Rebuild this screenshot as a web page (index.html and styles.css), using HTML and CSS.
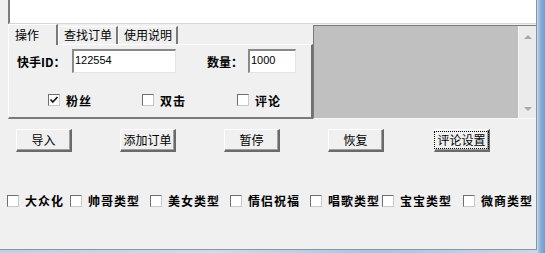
FILE: index.html
```html
<!DOCTYPE html>
<html lang="zh-CN">
<head>
<meta charset="utf-8">
<title>快手订单</title>
<link rel="stylesheet" href="styles.css">
</head>
<body>
<div class="window">
  <div class="client">
    <div class="memo"></div>
    <div class="mid">
      <div class="tabctl">
        <div class="tabbar">
          <div class="tab active">操作</div>
          <div class="tab">查找订单</div>
          <div class="tab">使用说明</div>
        </div>
        <div class="panel">
          <div class="fields">
            <span class="lbl lbl-id">快手ID：</span>
            <div class="input input-id">122554</div>
            <span class="lbl lbl-qty">数量：</span>
            <div class="input input-qty">1000</div>
          </div>
          <div class="opts">
            <label class="chk opt1"><span class="box"><svg width="10" height="10" viewBox="0 0 10 10"><polyline points="1.5,4.5 3.8,7 8.5,2" fill="none" stroke="#1a1a1a" stroke-width="1.8"/></svg></span><span class="txt">粉丝</span></label>
            <label class="chk opt2"><span class="box"></span><span class="txt">双击</span></label>
            <label class="chk opt3"><span class="box"></span><span class="txt">评论</span></label>
          </div>
        </div>
      </div>
      <div class="list">
        <div class="listbody"></div>
        <div class="vscroll">
          <span class="arr up"></span>
          <span class="arr down"></span>
        </div>
      </div>
    </div>
    <div class="buttons">
      <div class="btn">导入</div>
      <div class="btn">添加订单</div>
      <div class="btn">暂停</div>
      <div class="btn">恢复</div>
      <div class="btn focused"><span class="focus">评论设置</span></div>
    </div>
    <div class="types">
      <label class="chk"><span class="box"></span><span class="txt">大众化</span></label>
      <label class="chk"><span class="box"></span><span class="txt">帅哥类型</span></label>
      <label class="chk"><span class="box"></span><span class="txt">美女类型</span></label>
      <label class="chk"><span class="box"></span><span class="txt">情侣祝福</span></label>
      <label class="chk"><span class="box"></span><span class="txt">唱歌类型</span></label>
      <label class="chk"><span class="box"></span><span class="txt">宝宝类型</span></label>
      <label class="chk"><span class="box"></span><span class="txt">微商类型</span></label>
    </div>
  </div>
  <div class="frame-right"></div>
  <div class="frame-bottom"></div>
</div>
</body>
</html>
```

FILE: styles.css
```css
html, body {
  margin: 0;
  padding: 0;
}
body {
  width: 545px;
  height: 253px;
  overflow: hidden;
  background: #f0f0f0;
  font-family: "Noto Sans CJK SC", "Liberation Sans", sans-serif;
  font-size: 12px;
  color: #000;
}
.window {
  display: grid;
  grid-template-columns: 537px 8px;
  grid-template-rows: 250px 3px;
  width: 545px;
  height: 253px;
}
.client {
  grid-column: 1;
  grid-row: 1;
  box-sizing: border-box;
  border-right: 1px solid #8d949c;
  border-bottom: 1px solid #8d949c;
  background: #f0f0f0;
  display: flex;
  flex-direction: column;
}
.frame-right {
  grid-column: 2;
  grid-row: 1 / span 2;
  background: linear-gradient(to right, #c9dbef 0, #8fb3dc 35%, #6e9bd0 100%);
}
.frame-bottom {
  grid-column: 1;
  grid-row: 2;
  background: linear-gradient(to right, #b9d1ec 0, #c9dcf1 40%, #a8c5e6 70%, #c4d9f0 100%);
}

/* memo at top */
.memo {
  margin-left: 8px;
  height: 23px;
  background: #fff;
  border-left: 2px solid #7d7d7d;
  border-bottom: 1px solid #d6d6d6;
}

/* middle: tab control + list */
.mid {
  display: flex;
  height: 95px;
}
.tabctl {
  margin-left: 8px;
  width: 305px;
  display: flex;
  flex-direction: column;
}
.tabbar {
  display: flex;
  align-items: flex-end;
  height: 20px;
  position: relative;
  z-index: 1;
}
.tab {
  box-sizing: border-box;
  height: 18px;
  line-height: 16px;
  padding-left: 5px;
  border-top: 1px solid #fff;
  border-left: 1px solid #fff;
  border-right: 2px solid #7a7a7a;
  background: #f0f0f0;
  white-space: nowrap;
}
.tab:nth-child(2) {
  margin-left: 0;
  width: 60px;
}
.tab:nth-child(3) {
  width: 60px;
}
.tab.active {
  width: 50px;
  height: 21px;
  margin-bottom: -1px;
  padding-left: 6px;
  line-height: 19px;
  border-right: 2px solid #7a7a7a;
}
.panel {
  box-sizing: border-box;
  height: 75px;
  border-top: 1px solid #fff;
  border-left: 1px solid #fff;
  border-right: 2px solid #6f6f6f;
  border-bottom: 2px solid #7a7a7a;
  padding-top: 4px;
}
.fields {
  display: flex;
  align-items: center;
  height: 24px;
  padding-left: 8px;
}
.lbl {
  font-weight: 700;
  white-space: nowrap;
}
.lbl-id {
  width: 55px;
}
.lbl-qty {
  margin-left: 31px;
  width: 41px;
}
.input {
  box-sizing: border-box;
  height: 24px;
  background: #fff;
  border-top: 2px solid #8a8a8a;
  border-left: 2px solid #8a8a8a;
  border-right: 1px solid #e4e4e4;
  border-bottom: 1px solid #e4e4e4;
  font-family: "Liberation Sans", sans-serif;
  font-size: 11px;
  line-height: 13px;
  padding: 3px 0 0 1px;
}
.input-id {
  width: 104px;
}
.input-qty {
  width: 48px;
}
.opts {
  display: flex;
  align-items: center;
  margin-top: 20px;
  height: 14px;
}
.opt1 { margin-left: 39px; }
.opt2 { margin-left: 50px; }
.opt3 { margin-left: 51px; }

/* checkbox */
.chk {
  display: flex;
  align-items: center;
  white-space: nowrap;
}
.box {
  box-sizing: border-box;
  width: 12px;
  height: 12px;
  background: #fff;
  border-top: 1px solid #6f6f6f;
  border-left: 1px solid #6f6f6f;
  border-right: 1px solid #c8c8c8;
  border-bottom: 1px solid #c8c8c8;
  display: flex;
  align-items: center;
  justify-content: center;
  flex: none;
}
.box svg {
  display: block;
}
.txt {
  margin-left: 6px;
  font-weight: 700;
  letter-spacing: 1px;
}

/* grey list */
.list {
  flex: 1;
  margin-top: 1px;
  height: 94px;
  box-sizing: border-box;
  display: flex;
  border-top: 1px solid #7a7a7a;
  border-left: 1px solid #7a7a7a;
  border-bottom: 1px solid #f8f8f8;
}
.listbody {
  flex: 1;
  background: #c0c0c0;
}
.vscroll {
  width: 18px;
  background: #ebebeb;
  border-left: 1px solid #f7f7f7;
  display: flex;
  flex-direction: column;
  justify-content: space-between;
  align-items: center;
  padding: 9px 0 7px;
  box-sizing: border-box;
}
.arr {
  width: 0;
  height: 0;
  border-left: 4px solid transparent;
  border-right: 4px solid transparent;
}
.arr.up {
  border-bottom: 4px solid #a9a9a9;
}
.arr.down {
  border-top: 4px solid #a9a9a9;
}

/* buttons */
.buttons {
  display: flex;
  margin-top: 10px;
  padding-left: 16px;
  gap: 48px;
}
.btn {
  box-sizing: border-box;
  width: 56px;
  height: 23px;
  background: #f0f0f0;
  border-top: 1px solid #fff;
  border-left: 1px solid #fff;
  border-right: 2px solid #6a6a6a;
  border-bottom: 2px solid #6a6a6a;
  box-shadow: inset -1px -1px 0 #a0a0a0;
  display: flex;
  align-items: center;
  justify-content: center;
  line-height: 16px;
  white-space: nowrap;
}
.btn.focused {
  margin-left: 2px;
}
.focus {
  box-sizing: border-box;
  outline: 1px dotted #000;
  outline-offset: 1px;
  padding: 0 1px;
  line-height: 14px;
}

/* bottom type checkboxes */
.types {
  display: grid;
  grid-template-columns: 63px 80px 80px 80px 72px 81px auto;
  padding-left: 7px;
  margin-top: 40px;
  height: 12px;
  align-items: center;
}
```
